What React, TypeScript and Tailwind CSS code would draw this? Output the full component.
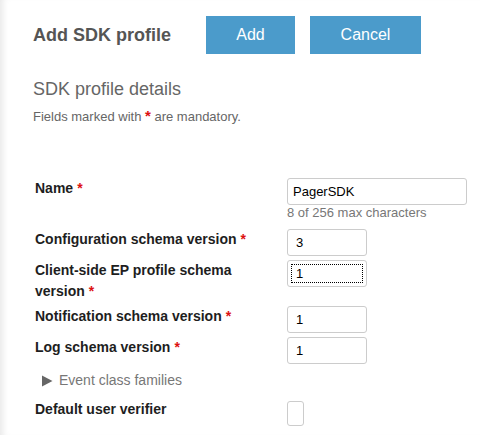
import React from 'react';

function Star() {
  return <span className="ml-1 font-bold text-[#dd1111]">*</span>;
}

function Row({
  label,
  required,
  children,
}: {
  label: string;
  required?: boolean;
  children: React.ReactNode;
}) {
  return (
    <div className="flex items-start">
      <div className="w-[252px] shrink-0 pr-[24px] text-[14px] font-bold leading-[21px] text-[#1e1e1e]">
        {label}
        {required && <Star />}
      </div>
      <div>{children}</div>
    </div>
  );
}

function SmallInput({ value, focused }: { value: string; focused?: boolean }) {
  return (
    <input
      readOnly
      value={value}
      className={
        focused
          ? 'block h-[27px] w-[80px] rounded-[3px] border border-[#cccccc] bg-white pl-2 text-[13px] text-black outline-1 outline-dotted outline-black outline-offset-[-5px]'
          : 'block h-[27px] w-[80px] rounded-[3px] border border-[#cccccc] bg-white pl-2 text-[13px] text-black outline-none'
      }
    />
  );
}

export default function App() {
  return (
    <div
      className="h-[435px] w-[480px] overflow-hidden bg-white shadow-[inset_7px_0_6px_-4px_rgba(0,0,0,0.09)]"
      style={{ fontFamily: '"Liberation Sans", Arial, sans-serif' }}
    >
      {/* header */}
      <div className="flex items-center pl-[33px] pt-4">
        <h1 className="text-[18px] font-bold leading-[22px] text-[#555555]">Add SDK profile</h1>
        <button className="ml-[35px] h-[38px] w-[89px] bg-[#4b9bcb] text-[16px] text-white">Add</button>
        <button className="ml-[15px] h-[38px] w-[111px] bg-[#4b9bcb] text-[16px] text-white">Cancel</button>
      </div>

      <div className="pl-[33px]">
        <h2 className="mt-[25px] text-[18px] leading-[20px] text-[#666666]">SDK profile details</h2>
        <p className="mt-[8px] text-[13px] leading-[18px] text-[#666666]">
          Fields marked with <span className="text-[15px] font-bold text-[#dd1111]">*</span> are mandatory.
        </p>
      </div>

      {/* form */}
      <div className="mt-[52px] flex flex-col gap-1 pl-[35px]">
        <Row label="Name" required>
          <input
            readOnly
            value="PagerSDK"
            className="block h-[27px] w-[180px] rounded-[3px] border border-[#cccccc] bg-white pl-[5px] text-[13px] text-black outline-none"
          />
          <div className="h-5 text-[13px] leading-4 text-[#777777]">8 of 256 max characters</div>
        </Row>
        <Row label="Configuration schema version" required>
          <SmallInput value="3" />
        </Row>
        <Row label="Client-side EP profile schema version" required>
          <SmallInput value="1" focused />
        </Row>
        <Row label="Notification schema version" required>
          <SmallInput value="1" />
        </Row>
        <Row label="Log schema version" required>
          <SmallInput value="1" />
        </Row>

        <div className="mt-0.5 flex items-center pl-[7px] text-[14px] leading-[21px] text-[#777777]">
          <svg width="11" height="12" viewBox="0 0 11 12" className="mr-[6px]">
            <path d="M0 0.5 L10.5 6 L0 11.5 Z" fill="#666666" />
          </svg>
          Event class families
        </div>

        <div className="mt-1 flex items-start">
          <div className="w-[252px] shrink-0 text-[14px] font-bold leading-[21px] text-[#1e1e1e]">
            Default user verifier
          </div>
          <div className="mt-[2px] h-[25px] w-[17px] rounded-[3px] border border-[#cccccc] bg-white" />
        </div>
      </div>
    </div>
  );
}
